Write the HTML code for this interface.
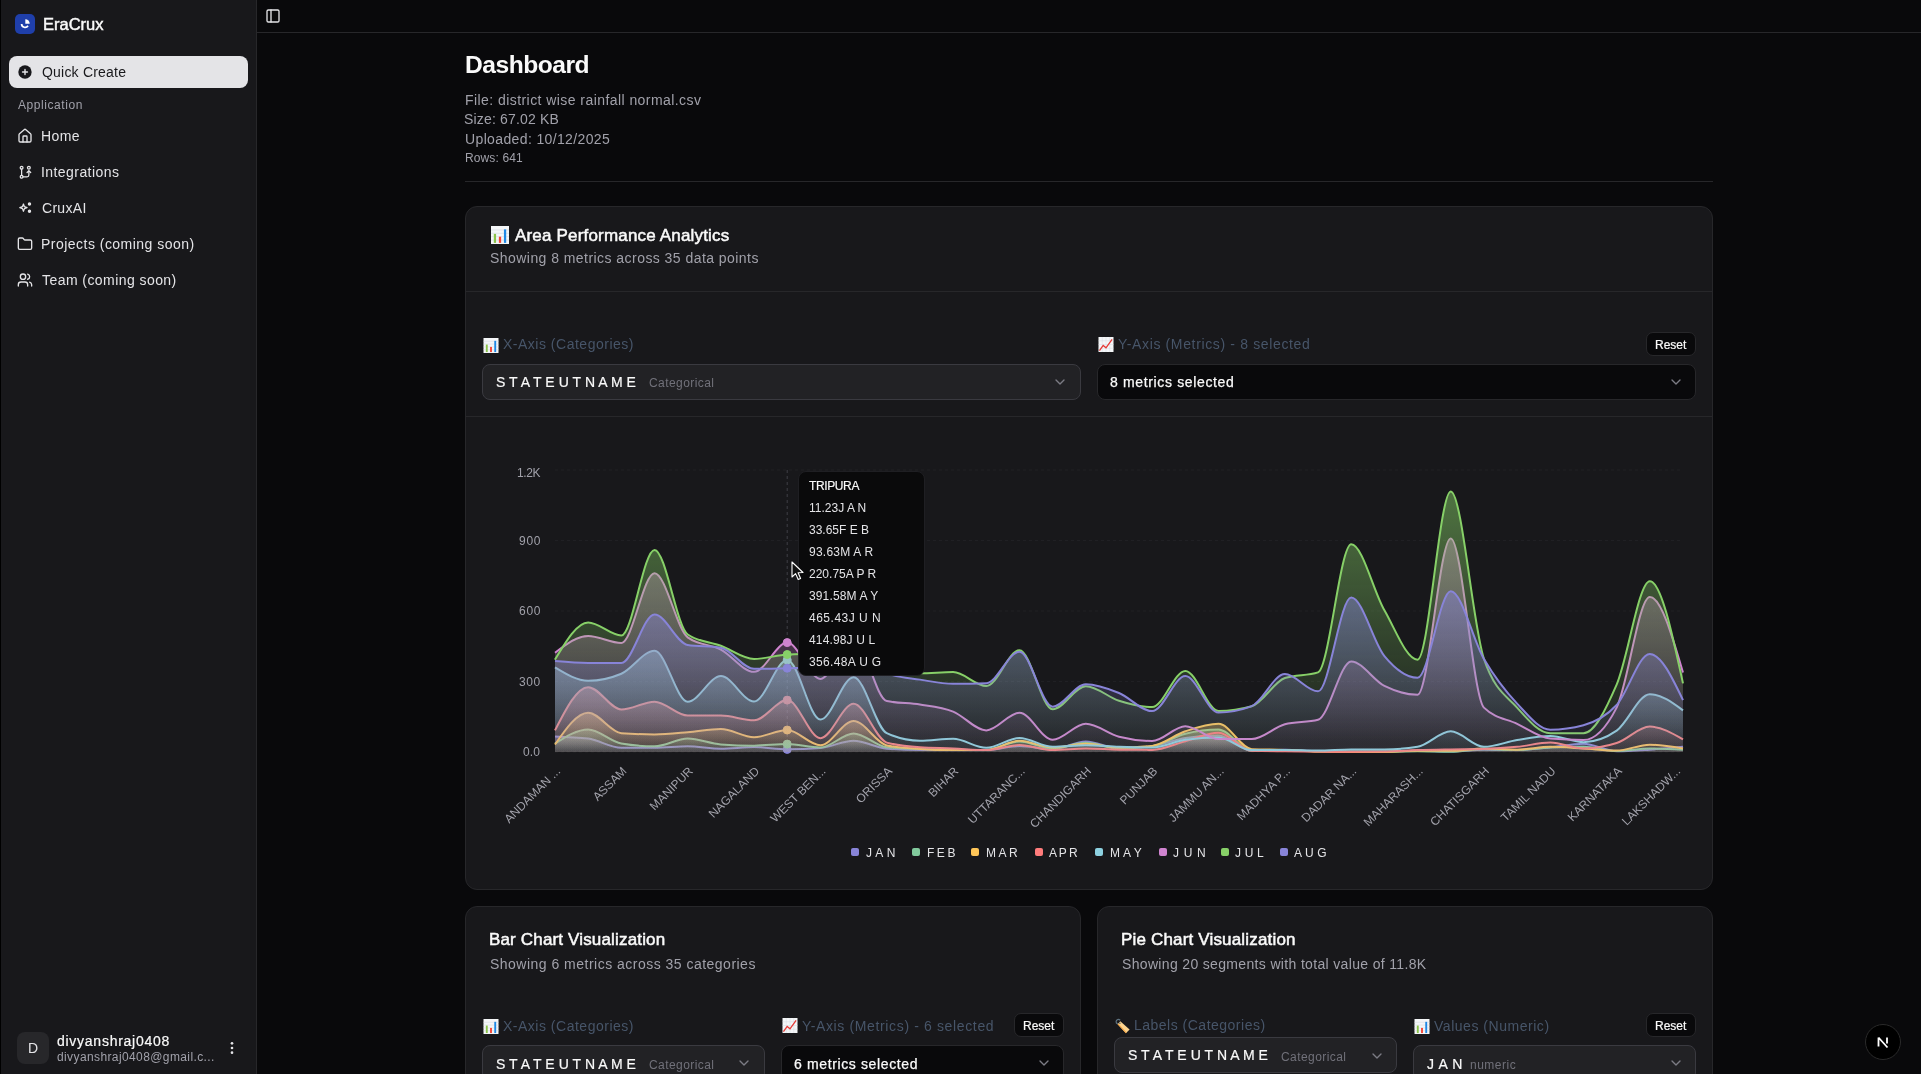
<!DOCTYPE html>
<html><head><meta charset="utf-8">
<style>
*{box-sizing:border-box;margin:0;padding:0}
html,body{width:1921px;height:1074px;overflow:hidden;background:#09090b;font-family:"Liberation Sans",sans-serif;color:#fafafa;position:relative}
.abs{position:absolute}
.t{position:absolute;white-space:nowrap;line-height:1;will-change:transform}
svg{position:absolute;overflow:visible}
.card{position:absolute;background:#18181b;border:1px solid #27272a;border-radius:12px}
.sel{position:absolute;border:1px solid #3a3a40;border-radius:8px;background:#222225}
.sel2{position:absolute;border:1px solid #27272a;border-radius:8px;background:#09090b}
.btn{position:absolute;border:1px solid #27272a;border-radius:7px;background:#09090b}
</style></head><body>
<div class="abs" style="left:0;top:0;width:1px;height:1074px;background:#000"></div>
<div class="abs" style="left:1px;top:0;width:256px;height:1074px;background:#18181b;border-right:1px solid #27272a"></div>
<div class="abs" style="left:257px;top:0;width:1664px;height:33px;border-bottom:1px solid #27272a"></div>
<div class="abs" style="left:15px;top:14px;width:20px;height:20px;border-radius:5px;background:#1f3faa"></div>
<svg style="left:15px;top:14px" width="20" height="20" viewBox="0 0 20 20"><path d="M6.6 10A3.45 3.45 0 0 0 13 11.7" stroke="#fff" stroke-width="1.75" fill="none"/><path d="M10.3 9.7V5.3A4.4 4.4 0 0 1 14.7 9.7Z" fill="#fff"/></svg>
<div class="t" style="left:42.80px;top:16.45px;font-size:16.5px;color:#fafafa;-webkit-text-stroke:0.45px currentColor;letter-spacing:-0.011px;">EraCrux</div>
<div class="abs" style="left:9px;top:56px;width:239px;height:32px;border-radius:8px;background:#e4e4e7"></div>
<svg style="left:17px;top:64px" width="16" height="16" viewBox="0 0 24 24"><circle cx="12" cy="12" r="10" fill="#18181b"/><path d="M12 8.3v7.4M8.3 12h7.4" stroke="#e4e4e7" stroke-width="2.1" stroke-linecap="round"/></svg>
<div class="t" style="left:41.80px;top:65.37px;font-size:14px;color:#18181b;letter-spacing:0.208px;">Quick Create</div>
<div class="t" style="left:17.60px;top:98.73px;font-size:12px;color:#a1a1aa;letter-spacing:0.567px;">Application</div>
<svg style="left:17px;top:128px;color:#e4e4e7" width="16" height="16" viewBox="0 0 24 24" fill="none" stroke="currentColor" stroke-width="2" stroke-linecap="round" stroke-linejoin="round"><path d="M15 21v-8a1 1 0 0 0-1-1h-4a1 1 0 0 0-1 1v8"/><path d="M3 10a2 2 0 0 1 .709-1.528l7-5.999a2 2 0 0 1 2.582 0l7 5.999A2 2 0 0 1 21 10v9a2 2 0 0 1-2 2H5a2 2 0 0 1-2-2z"/></svg>
<div class="t" style="left:40.80px;top:129.17px;font-size:14px;color:#e4e4e7;letter-spacing:0.380px;">Home</div>
<svg style="left:17.8px;top:164.8px;color:#e4e4e7" width="14.5" height="14.5" viewBox="0 0 24 24" fill="none" stroke="currentColor" stroke-width="2.1" stroke-linecap="round" stroke-linejoin="round"><circle cx="6" cy="4.5" r="2.3"/><circle cx="6" cy="19.5" r="2.3"/><circle cx="18" cy="4.5" r="2.3"/><path d="M6 6.8v10.4"/><path d="M8.3 19.5H15a3 3 0 0 0 3-3V10"/><path d="M15 12.5l3-3 3 3"/></svg>
<div class="t" style="left:40.80px;top:165.17px;font-size:14px;color:#e4e4e7;letter-spacing:0.431px;">Integrations</div>
<svg style="left:17.8px;top:200.8px;color:#e4e4e7" width="14.5" height="14.5" viewBox="0 0 24 24" fill="none" stroke="currentColor" stroke-width="2.1" stroke-linecap="round" stroke-linejoin="round"><path d="M9 5l1.6 4.4L15 11l-4.4 1.6L9 17l-1.6-4.4L3 11l4.4-1.6z"/><circle cx="19" cy="5" r="1.8" fill="currentColor"/><circle cx="19" cy="17" r="1.8" fill="currentColor"/></svg>
<div class="t" style="left:41.80px;top:201.17px;font-size:14px;color:#e4e4e7;letter-spacing:0.301px;">CruxAI</div>
<svg style="left:17px;top:236px;color:#e4e4e7" width="16" height="16" viewBox="0 0 24 24" fill="none" stroke="currentColor" stroke-width="2" stroke-linecap="round" stroke-linejoin="round"><path d="M20 20a2 2 0 0 0 2-2V8a2 2 0 0 0-2-2h-7.9a2 2 0 0 1-1.69-.9L9.6 3.9A2 2 0 0 0 7.93 3H4a2 2 0 0 0-2 2v13a2 2 0 0 0 2 2Z"/></svg>
<div class="t" style="left:40.80px;top:237.17px;font-size:14px;color:#e4e4e7;letter-spacing:0.476px;">Projects (coming soon)</div>
<svg style="left:17px;top:272px;color:#e4e4e7" width="16" height="16" viewBox="0 0 24 24" fill="none" stroke="currentColor" stroke-width="2" stroke-linecap="round" stroke-linejoin="round"><path d="M16 21v-2a4 4 0 0 0-4-4H6a4 4 0 0 0-4 4v2"/><circle cx="9" cy="7" r="4"/><path d="M22 21v-2a4 4 0 0 0-3-3.87"/><path d="M16 3.13a4 4 0 0 1 0 7.75"/></svg>
<div class="t" style="left:41.80px;top:273.17px;font-size:14px;color:#e4e4e7;letter-spacing:0.437px;">Team (coming soon)</div>
<div class="abs" style="left:17px;top:1032px;width:32px;height:32px;border-radius:8px;background:#27272a"></div>
<div class="t" style="left:28.00px;top:1041.47px;font-size:14px;color:#e4e4e7;letter-spacing:0.000px;">D</div>
<div class="t" style="left:57.30px;top:1034.17px;font-size:14px;color:#fafafa;-webkit-text-stroke:0.2px currentColor;letter-spacing:0.738px;">divyanshraj0408</div>
<div class="t" style="left:57.30px;top:1050.93px;font-size:12px;color:#a1a1aa;letter-spacing:0.390px;">divyanshraj0408@gmail.c...</div>
<svg style="left:224px;top:1040px" width="16" height="16" viewBox="0 0 24 24" fill="#e4e4e7"><circle cx="12" cy="5" r="2"/><circle cx="12" cy="12" r="2"/><circle cx="12" cy="19" r="2"/></svg>
<svg style="left:265px;top:8px;color:#e4e4e7" width="16" height="16" viewBox="0 0 24 24" fill="none" stroke="currentColor" stroke-width="2" stroke-linecap="round" stroke-linejoin="round"><rect width="18" height="18" x="3" y="3" rx="2"/><path d="M9 3v18"/></svg>
<div class="t" style="left:464.90px;top:53.19px;font-size:24.6px;color:#fafafa;font-weight:bold;letter-spacing:-0.479px;">Dashboard</div>
<div class="t" style="left:464.50px;top:93.17px;font-size:14px;color:#a1a1aa;letter-spacing:0.437px;">File: district wise rainfall normal.csv</div>
<div class="t" style="left:464.40px;top:112.47px;font-size:14px;color:#a1a1aa;letter-spacing:0.179px;">Size: 67.02 KB</div>
<div class="t" style="left:464.50px;top:132.17px;font-size:14px;color:#a1a1aa;letter-spacing:0.368px;">Uploaded: 10/12/2025</div>
<div class="t" style="left:464.60px;top:151.83px;font-size:12px;color:#a1a1aa;letter-spacing:0.122px;">Rows: 641</div>
<div class="abs" style="left:465px;top:181px;width:1248px;height:1px;background:#27272a"></div>
<div class="card" style="left:465px;top:206px;width:1248px;height:684px"></div>
<svg style="left:491px;top:226px" width="18" height="18" viewBox="0 0 16 16"><rect x="0" y="0" width="16" height="16" fill="#f4f6f8"/><path d="M0 3.5h16M0 6.5h16M0 9.5h16M0 12.5h16" stroke="#d5dbe3" stroke-width="0.6"/><rect x="2.5" y="7" width="2" height="8" fill="#8bc34a"/><rect x="7" y="9.5" width="2" height="5.5" fill="#f44336"/><rect x="11.5" y="3" width="2" height="12" fill="#1e88e5"/></svg>
<div class="t" style="left:514.60px;top:226.58px;font-size:17px;color:#fafafa;-webkit-text-stroke:0.5px currentColor;letter-spacing:0.180px;">Area Performance Analytics</div>
<div class="t" style="left:489.80px;top:250.67px;font-size:14px;color:#a1a1aa;letter-spacing:0.449px;">Showing 8 metrics across 35 data points</div>
<div class="abs" style="left:466px;top:291px;width:1246px;height:1px;background:#27272a"></div>
<svg style="left:483px;top:338px" width="16" height="15" viewBox="0 0 16 16"><rect x="0" y="0" width="16" height="16" fill="#f4f6f8"/><path d="M0 3.5h16M0 6.5h16M0 9.5h16M0 12.5h16" stroke="#d5dbe3" stroke-width="0.6"/><rect x="2.5" y="7" width="2" height="8" fill="#8bc34a"/><rect x="7" y="9.5" width="2" height="5.5" fill="#f44336"/><rect x="11.5" y="3" width="2" height="12" fill="#1e88e5"/></svg>
<div class="t" style="left:503.20px;top:337.37px;font-size:14px;color:#475569;letter-spacing:0.505px;">X-Axis (Categories)</div>
<div class="sel" style="left:482px;top:364px;width:599px;height:36px"></div>
<div class="t" style="left:495.70px;top:375.27px;font-size:14px;color:#fafafa;-webkit-text-stroke:0.2px currentColor;letter-spacing:0.071px;">S T A T E U T N A M E</div>
<div class="t" style="left:648.70px;top:377.43px;font-size:12px;color:#71717a;letter-spacing:0.427px;">Categorical</div>
<svg style="left:1052px;top:374px;color:#7c7c85" width="16" height="16" viewBox="0 0 24 24" fill="none" stroke="currentColor" stroke-width="2" stroke-linecap="round" stroke-linejoin="round"><path d="m6 9 6 6 6-6"/></svg>
<svg style="left:1098px;top:337px" width="16" height="15" viewBox="0 0 16 16"><rect x="0" y="0" width="16" height="16" fill="#f4f6f8"/><path d="M0 4h16M0 8h16M0 12h16M4 0v16M8 0v16M12 0v16" stroke="#d5dbe3" stroke-width="0.5"/><path d="M1 14.5L5 9l3 2.5L14.5 2.5" stroke="#e53935" stroke-width="1.4" fill="none"/></svg>
<div class="t" style="left:1118.00px;top:337.37px;font-size:14px;color:#475569;letter-spacing:0.644px;">Y-Axis (Metrics) - 8 selected</div>
<div class="btn" style="left:1646px;top:332px;width:50px;height:24px"></div>
<div class="t" style="left:1655.00px;top:338.63px;font-size:12px;color:#fafafa;-webkit-text-stroke:0.2px currentColor;letter-spacing:-0.003px;">Reset</div>
<div class="sel2" style="left:1097px;top:364px;width:599px;height:36px"></div>
<div class="t" style="left:1110.30px;top:375.27px;font-size:14px;color:#fafafa;-webkit-text-stroke:0.25px currentColor;letter-spacing:0.645px;">8 metrics selected</div>
<svg style="left:1668px;top:374px;color:#7c7c85" width="16" height="16" viewBox="0 0 24 24" fill="none" stroke="currentColor" stroke-width="2" stroke-linecap="round" stroke-linejoin="round"><path d="m6 9 6 6 6-6"/></svg>
<div class="abs" style="left:466px;top:416px;width:1246px;height:1px;background:#27272a"></div>
<svg style="left:0;top:0;will-change:transform" width="1921" height="1074" viewBox="0 0 1921 1074">
<defs>
<linearGradient id="g0" x1="0" y1="0" x2="0" y2="1"><stop offset="5%" stop-color="#8884d8" stop-opacity="0.8"/><stop offset="95%" stop-color="#8884d8" stop-opacity="0.1"/></linearGradient>
<linearGradient id="g1" x1="0" y1="0" x2="0" y2="1"><stop offset="5%" stop-color="#82ca9d" stop-opacity="0.8"/><stop offset="95%" stop-color="#82ca9d" stop-opacity="0.1"/></linearGradient>
<linearGradient id="g2" x1="0" y1="0" x2="0" y2="1"><stop offset="5%" stop-color="#ffc658" stop-opacity="0.8"/><stop offset="95%" stop-color="#ffc658" stop-opacity="0.1"/></linearGradient>
<linearGradient id="g3" x1="0" y1="0" x2="0" y2="1"><stop offset="5%" stop-color="#ff7c7c" stop-opacity="0.8"/><stop offset="95%" stop-color="#ff7c7c" stop-opacity="0.1"/></linearGradient>
<linearGradient id="g4" x1="0" y1="0" x2="0" y2="1"><stop offset="5%" stop-color="#8dd1e1" stop-opacity="0.8"/><stop offset="95%" stop-color="#8dd1e1" stop-opacity="0.1"/></linearGradient>
<linearGradient id="g5" x1="0" y1="0" x2="0" y2="1"><stop offset="5%" stop-color="#d084d0" stop-opacity="0.8"/><stop offset="95%" stop-color="#d084d0" stop-opacity="0.1"/></linearGradient>
<linearGradient id="g6" x1="0" y1="0" x2="0" y2="1"><stop offset="5%" stop-color="#87d068" stop-opacity="0.8"/><stop offset="95%" stop-color="#87d068" stop-opacity="0.1"/></linearGradient>
<linearGradient id="g7" x1="0" y1="0" x2="0" y2="1"><stop offset="5%" stop-color="#8884d8" stop-opacity="0.8"/><stop offset="95%" stop-color="#8884d8" stop-opacity="0.1"/></linearGradient>
</defs>
<line x1="555.0" y1="752.0" x2="1683.0" y2="752.0" stroke="#202024" stroke-dasharray="3 3" stroke-width="1"/>
<line x1="555.0" y1="681.5" x2="1683.0" y2="681.5" stroke="#202024" stroke-dasharray="3 3" stroke-width="1"/>
<line x1="555.0" y1="611.0" x2="1683.0" y2="611.0" stroke="#202024" stroke-dasharray="3 3" stroke-width="1"/>
<line x1="555.0" y1="540.5" x2="1683.0" y2="540.5" stroke="#202024" stroke-dasharray="3 3" stroke-width="1"/>
<line x1="555.0" y1="470.0" x2="1683.0" y2="470.0" stroke="#202024" stroke-dasharray="3 3" stroke-width="1"/>
<line x1="787.2" y1="470" x2="787.2" y2="752" stroke="#3f3f46" stroke-dasharray="3 3" stroke-width="1"/>
<path d="M555.00,736.49C566.06,736.84,577.12,737.20,588.18,738.61C599.24,740.01,610.29,747.77,621.35,747.77C632.41,747.77,643.47,747.77,654.53,747.77C665.59,747.77,676.65,746.36,687.71,746.36C698.76,746.36,709.82,748.71,720.88,748.71C731.94,748.71,743.00,747.07,754.06,747.07C765.12,747.07,776.18,749.36,787.24,749.36C798.29,749.36,809.35,748.91,820.41,748.00C831.47,747.10,842.53,740.72,853.59,740.72C864.65,740.72,875.71,747.77,886.76,748.71C897.82,749.65,908.88,750.12,919.94,750.12C931.00,750.12,942.06,750.12,953.12,750.12C964.18,750.12,975.24,750.12,986.29,750.12C997.35,750.12,1008.41,746.12,1019.47,746.12C1030.53,746.12,1041.59,749.18,1052.65,749.18C1063.71,749.18,1074.76,741.42,1085.82,741.42C1096.88,741.42,1107.94,748.48,1119.00,748.48C1130.06,748.48,1141.12,747.69,1152.18,746.12C1163.24,744.56,1174.29,739.47,1185.35,737.90C1196.41,736.33,1207.47,735.55,1218.53,735.55C1229.59,735.55,1240.65,750.83,1251.71,750.83C1262.76,750.83,1273.82,749.65,1284.88,749.65C1295.94,749.65,1307.00,751.14,1318.06,751.29C1329.12,751.45,1340.18,751.45,1351.24,751.53C1362.29,751.61,1373.35,751.76,1384.41,751.76C1395.47,751.76,1406.53,750.83,1417.59,750.83C1428.65,750.83,1439.71,751.53,1450.76,751.53C1461.82,751.53,1472.88,749.65,1483.94,749.65C1495.00,749.65,1506.06,750.12,1517.12,750.12C1528.18,750.12,1539.24,748.36,1550.29,747.30C1561.35,746.24,1572.41,743.77,1583.47,743.77C1594.53,743.77,1605.59,751.29,1616.65,751.29C1627.71,751.29,1638.76,750.39,1649.82,749.65C1660.88,748.91,1671.94,747.87,1683.00,746.83L1683.0,752.0L555.0,752.0Z" fill="url(#g0)" fill-opacity="0.6" stroke="none"/>
<path d="M555.00,736.49C566.06,736.84,577.12,737.20,588.18,738.61C599.24,740.01,610.29,747.77,621.35,747.77C632.41,747.77,643.47,747.77,654.53,747.77C665.59,747.77,676.65,746.36,687.71,746.36C698.76,746.36,709.82,748.71,720.88,748.71C731.94,748.71,743.00,747.07,754.06,747.07C765.12,747.07,776.18,749.36,787.24,749.36C798.29,749.36,809.35,748.91,820.41,748.00C831.47,747.10,842.53,740.72,853.59,740.72C864.65,740.72,875.71,747.77,886.76,748.71C897.82,749.65,908.88,750.12,919.94,750.12C931.00,750.12,942.06,750.12,953.12,750.12C964.18,750.12,975.24,750.12,986.29,750.12C997.35,750.12,1008.41,746.12,1019.47,746.12C1030.53,746.12,1041.59,749.18,1052.65,749.18C1063.71,749.18,1074.76,741.42,1085.82,741.42C1096.88,741.42,1107.94,748.48,1119.00,748.48C1130.06,748.48,1141.12,747.69,1152.18,746.12C1163.24,744.56,1174.29,739.47,1185.35,737.90C1196.41,736.33,1207.47,735.55,1218.53,735.55C1229.59,735.55,1240.65,750.83,1251.71,750.83C1262.76,750.83,1273.82,749.65,1284.88,749.65C1295.94,749.65,1307.00,751.14,1318.06,751.29C1329.12,751.45,1340.18,751.45,1351.24,751.53C1362.29,751.61,1373.35,751.76,1384.41,751.76C1395.47,751.76,1406.53,750.83,1417.59,750.83C1428.65,750.83,1439.71,751.53,1450.76,751.53C1461.82,751.53,1472.88,749.65,1483.94,749.65C1495.00,749.65,1506.06,750.12,1517.12,750.12C1528.18,750.12,1539.24,748.36,1550.29,747.30C1561.35,746.24,1572.41,743.77,1583.47,743.77C1594.53,743.77,1605.59,751.29,1616.65,751.29C1627.71,751.29,1638.76,750.39,1649.82,749.65C1660.88,748.91,1671.94,747.87,1683.00,746.83" fill="none" stroke="#8884d8" stroke-width="2"/>
<circle cx="787.2" cy="749.4" r="4" fill="#8884d8" stroke="#8884d8" stroke-width="1"/>
<path d="M555.00,743.54C566.06,736.49,577.12,729.44,588.18,729.44C599.24,729.44,610.29,741.66,621.35,743.54C632.41,745.42,643.47,746.36,654.53,746.36C665.59,746.36,676.65,738.61,687.71,738.61C698.76,738.61,709.82,743.70,720.88,744.48C731.94,745.26,743.00,745.65,754.06,745.65C765.12,745.65,776.18,744.09,787.24,744.09C798.29,744.09,809.35,747.53,820.41,747.53C831.47,747.53,842.53,733.43,853.59,733.43C864.65,733.43,875.71,746.20,886.76,747.30C897.82,748.40,908.88,748.51,919.94,748.95C931.00,749.38,942.06,749.88,953.12,749.88C964.18,749.88,975.24,749.88,986.29,749.88C997.35,749.88,1008.41,741.42,1019.47,741.42C1030.53,741.42,1041.59,748.48,1052.65,748.48C1063.71,748.48,1074.76,742.84,1085.82,742.84C1096.88,742.84,1107.94,748.48,1119.00,748.48C1130.06,748.48,1141.12,747.69,1152.18,746.12C1163.24,744.56,1174.29,736.45,1185.35,733.67C1196.41,730.89,1207.47,729.44,1218.53,729.44C1229.59,729.44,1240.65,750.83,1251.71,750.83C1262.76,750.83,1273.82,750.12,1284.88,750.12C1295.94,750.12,1307.00,751.37,1318.06,751.53C1329.12,751.69,1340.18,751.76,1351.24,751.76C1362.29,751.76,1373.35,751.76,1384.41,751.76C1395.47,751.76,1406.53,751.29,1417.59,751.29C1428.65,751.29,1439.71,751.76,1450.76,751.76C1461.82,751.76,1472.88,749.18,1483.94,749.18C1495.00,749.18,1506.06,750.12,1517.12,750.12C1528.18,750.12,1539.24,748.00,1550.29,747.53C1561.35,747.07,1572.41,746.83,1583.47,746.83C1594.53,746.83,1605.59,751.06,1616.65,751.06C1627.71,751.06,1638.76,748.48,1649.82,748.48C1660.88,748.48,1671.94,749.06,1683.00,749.65L1683.0,752.0L555.0,752.0Z" fill="url(#g1)" fill-opacity="0.6" stroke="none"/>
<path d="M555.00,743.54C566.06,736.49,577.12,729.44,588.18,729.44C599.24,729.44,610.29,741.66,621.35,743.54C632.41,745.42,643.47,746.36,654.53,746.36C665.59,746.36,676.65,738.61,687.71,738.61C698.76,738.61,709.82,743.70,720.88,744.48C731.94,745.26,743.00,745.65,754.06,745.65C765.12,745.65,776.18,744.09,787.24,744.09C798.29,744.09,809.35,747.53,820.41,747.53C831.47,747.53,842.53,733.43,853.59,733.43C864.65,733.43,875.71,746.20,886.76,747.30C897.82,748.40,908.88,748.51,919.94,748.95C931.00,749.38,942.06,749.88,953.12,749.88C964.18,749.88,975.24,749.88,986.29,749.88C997.35,749.88,1008.41,741.42,1019.47,741.42C1030.53,741.42,1041.59,748.48,1052.65,748.48C1063.71,748.48,1074.76,742.84,1085.82,742.84C1096.88,742.84,1107.94,748.48,1119.00,748.48C1130.06,748.48,1141.12,747.69,1152.18,746.12C1163.24,744.56,1174.29,736.45,1185.35,733.67C1196.41,730.89,1207.47,729.44,1218.53,729.44C1229.59,729.44,1240.65,750.83,1251.71,750.83C1262.76,750.83,1273.82,750.12,1284.88,750.12C1295.94,750.12,1307.00,751.37,1318.06,751.53C1329.12,751.69,1340.18,751.76,1351.24,751.76C1362.29,751.76,1373.35,751.76,1384.41,751.76C1395.47,751.76,1406.53,751.29,1417.59,751.29C1428.65,751.29,1439.71,751.76,1450.76,751.76C1461.82,751.76,1472.88,749.18,1483.94,749.18C1495.00,749.18,1506.06,750.12,1517.12,750.12C1528.18,750.12,1539.24,748.00,1550.29,747.53C1561.35,747.07,1572.41,746.83,1583.47,746.83C1594.53,746.83,1605.59,751.06,1616.65,751.06C1627.71,751.06,1638.76,748.48,1649.82,748.48C1660.88,748.48,1671.94,749.06,1683.00,749.65" fill="none" stroke="#82ca9d" stroke-width="2"/>
<circle cx="787.2" cy="744.1" r="4" fill="#82ca9d" stroke="#82ca9d" stroke-width="1"/>
<path d="M555.00,744.48C566.06,728.62,577.12,712.75,588.18,712.75C599.24,712.75,610.29,732.42,621.35,733.20C632.41,733.98,643.47,734.38,654.53,734.38C665.59,734.38,676.65,733.16,687.71,732.26C698.76,731.36,709.82,728.97,720.88,728.97C731.94,728.97,743.00,737.20,754.06,737.20C765.12,737.20,776.18,730.00,787.24,730.00C798.29,730.00,809.35,745.18,820.41,745.18C831.47,745.18,842.53,720.98,853.59,720.98C864.65,720.98,875.71,743.07,886.76,745.42C897.82,747.77,908.88,748.16,919.94,748.95C931.00,749.73,942.06,750.12,953.12,750.12C964.18,750.12,975.24,750.04,986.29,749.88C997.35,749.73,1008.41,740.72,1019.47,740.72C1030.53,740.72,1041.59,747.53,1052.65,747.53C1063.71,747.53,1074.76,743.77,1085.82,743.77C1096.88,743.77,1107.94,747.53,1119.00,747.53C1130.06,747.53,1141.12,746.99,1152.18,745.89C1163.24,744.79,1174.29,735.00,1185.35,731.32C1196.41,727.64,1207.47,723.80,1218.53,723.80C1229.59,723.80,1240.65,748.71,1251.71,749.18C1262.76,749.65,1273.82,749.49,1284.88,749.88C1295.94,750.28,1307.00,751.37,1318.06,751.53C1329.12,751.69,1340.18,751.76,1351.24,751.76C1362.29,751.76,1373.35,751.76,1384.41,751.76C1395.47,751.76,1406.53,750.83,1417.59,750.83C1428.65,750.83,1439.71,750.83,1450.76,750.83C1461.82,750.83,1472.88,748.48,1483.94,748.48C1495.00,748.48,1506.06,749.65,1517.12,749.65C1528.18,749.65,1539.24,746.83,1550.29,746.83C1561.35,746.83,1572.41,747.85,1583.47,748.48C1594.53,749.10,1605.59,750.59,1616.65,750.59C1627.71,750.59,1638.76,744.72,1649.82,744.72C1660.88,744.72,1671.94,746.60,1683.00,748.48L1683.0,752.0L555.0,752.0Z" fill="url(#g2)" fill-opacity="0.6" stroke="none"/>
<path d="M555.00,744.48C566.06,728.62,577.12,712.75,588.18,712.75C599.24,712.75,610.29,732.42,621.35,733.20C632.41,733.98,643.47,734.38,654.53,734.38C665.59,734.38,676.65,733.16,687.71,732.26C698.76,731.36,709.82,728.97,720.88,728.97C731.94,728.97,743.00,737.20,754.06,737.20C765.12,737.20,776.18,730.00,787.24,730.00C798.29,730.00,809.35,745.18,820.41,745.18C831.47,745.18,842.53,720.98,853.59,720.98C864.65,720.98,875.71,743.07,886.76,745.42C897.82,747.77,908.88,748.16,919.94,748.95C931.00,749.73,942.06,750.12,953.12,750.12C964.18,750.12,975.24,750.04,986.29,749.88C997.35,749.73,1008.41,740.72,1019.47,740.72C1030.53,740.72,1041.59,747.53,1052.65,747.53C1063.71,747.53,1074.76,743.77,1085.82,743.77C1096.88,743.77,1107.94,747.53,1119.00,747.53C1130.06,747.53,1141.12,746.99,1152.18,745.89C1163.24,744.79,1174.29,735.00,1185.35,731.32C1196.41,727.64,1207.47,723.80,1218.53,723.80C1229.59,723.80,1240.65,748.71,1251.71,749.18C1262.76,749.65,1273.82,749.49,1284.88,749.88C1295.94,750.28,1307.00,751.37,1318.06,751.53C1329.12,751.69,1340.18,751.76,1351.24,751.76C1362.29,751.76,1373.35,751.76,1384.41,751.76C1395.47,751.76,1406.53,750.83,1417.59,750.83C1428.65,750.83,1439.71,750.83,1450.76,750.83C1461.82,750.83,1472.88,748.48,1483.94,748.48C1495.00,748.48,1506.06,749.65,1517.12,749.65C1528.18,749.65,1539.24,746.83,1550.29,746.83C1561.35,746.83,1572.41,747.85,1583.47,748.48C1594.53,749.10,1605.59,750.59,1616.65,750.59C1627.71,750.59,1638.76,744.72,1649.82,744.72C1660.88,744.72,1671.94,746.60,1683.00,748.48" fill="none" stroke="#ffc658" stroke-width="2"/>
<circle cx="787.2" cy="730.0" r="4" fill="#ffc658" stroke="#ffc658" stroke-width="1"/>
<path d="M555.00,730.38C566.06,708.76,577.12,687.14,588.18,687.14C599.24,687.14,610.29,709.47,621.35,709.47C632.41,709.47,643.47,701.71,654.53,701.71C665.59,701.71,676.65,715.58,687.71,715.58C698.76,715.58,709.82,715.58,720.88,715.58C731.94,715.58,743.00,720.27,754.06,720.27C765.12,720.27,776.18,700.12,787.24,700.12C798.29,700.12,809.35,738.13,820.41,738.13C831.47,738.13,842.53,703.83,853.59,703.83C864.65,703.83,875.71,739.47,886.76,742.60C897.82,745.73,908.88,746.52,919.94,747.30C931.00,748.08,942.06,748.00,953.12,748.48C964.18,748.95,975.24,750.12,986.29,750.12C997.35,750.12,1008.41,744.95,1019.47,744.95C1030.53,744.95,1041.59,750.12,1052.65,750.12C1063.71,750.12,1074.76,748.48,1085.82,748.48C1096.88,748.48,1107.94,749.49,1119.00,749.65C1130.06,749.81,1141.12,749.88,1152.18,749.88C1163.24,749.88,1174.29,744.05,1185.35,741.19C1196.41,738.33,1207.47,732.73,1218.53,732.73C1229.59,732.73,1240.65,750.51,1251.71,750.83C1262.76,751.14,1273.82,751.18,1284.88,751.29C1295.94,751.41,1307.00,751.45,1318.06,751.53C1329.12,751.61,1340.18,751.76,1351.24,751.76C1362.29,751.76,1373.35,751.69,1384.41,751.53C1395.47,751.37,1406.53,750.47,1417.59,750.12C1428.65,749.77,1439.71,749.61,1450.76,749.41C1461.82,749.22,1472.88,749.26,1483.94,748.95C1495.00,748.63,1506.06,747.89,1517.12,746.83C1528.18,745.77,1539.24,742.60,1550.29,742.60C1561.35,742.60,1572.41,748.48,1583.47,748.48C1594.53,748.48,1605.59,746.67,1616.65,743.07C1627.71,739.47,1638.76,726.62,1649.82,726.62C1660.88,726.62,1671.94,732.96,1683.00,739.31L1683.0,752.0L555.0,752.0Z" fill="url(#g3)" fill-opacity="0.6" stroke="none"/>
<path d="M555.00,730.38C566.06,708.76,577.12,687.14,588.18,687.14C599.24,687.14,610.29,709.47,621.35,709.47C632.41,709.47,643.47,701.71,654.53,701.71C665.59,701.71,676.65,715.58,687.71,715.58C698.76,715.58,709.82,715.58,720.88,715.58C731.94,715.58,743.00,720.27,754.06,720.27C765.12,720.27,776.18,700.12,787.24,700.12C798.29,700.12,809.35,738.13,820.41,738.13C831.47,738.13,842.53,703.83,853.59,703.83C864.65,703.83,875.71,739.47,886.76,742.60C897.82,745.73,908.88,746.52,919.94,747.30C931.00,748.08,942.06,748.00,953.12,748.48C964.18,748.95,975.24,750.12,986.29,750.12C997.35,750.12,1008.41,744.95,1019.47,744.95C1030.53,744.95,1041.59,750.12,1052.65,750.12C1063.71,750.12,1074.76,748.48,1085.82,748.48C1096.88,748.48,1107.94,749.49,1119.00,749.65C1130.06,749.81,1141.12,749.88,1152.18,749.88C1163.24,749.88,1174.29,744.05,1185.35,741.19C1196.41,738.33,1207.47,732.73,1218.53,732.73C1229.59,732.73,1240.65,750.51,1251.71,750.83C1262.76,751.14,1273.82,751.18,1284.88,751.29C1295.94,751.41,1307.00,751.45,1318.06,751.53C1329.12,751.61,1340.18,751.76,1351.24,751.76C1362.29,751.76,1373.35,751.69,1384.41,751.53C1395.47,751.37,1406.53,750.47,1417.59,750.12C1428.65,749.77,1439.71,749.61,1450.76,749.41C1461.82,749.22,1472.88,749.26,1483.94,748.95C1495.00,748.63,1506.06,747.89,1517.12,746.83C1528.18,745.77,1539.24,742.60,1550.29,742.60C1561.35,742.60,1572.41,748.48,1583.47,748.48C1594.53,748.48,1605.59,746.67,1616.65,743.07C1627.71,739.47,1638.76,726.62,1649.82,726.62C1660.88,726.62,1671.94,732.96,1683.00,739.31" fill="none" stroke="#ff7c7c" stroke-width="2"/>
<circle cx="787.2" cy="700.1" r="4" fill="#ff7c7c" stroke="#ff7c7c" stroke-width="1"/>
<path d="M555.00,667.40C566.06,674.10,577.12,680.79,588.18,680.79C599.24,680.79,610.29,678.44,621.35,673.75C632.41,669.05,643.47,650.72,654.53,650.72C665.59,650.72,676.65,701.71,687.71,701.71C698.76,701.71,709.82,676.10,720.88,676.10C731.94,676.10,743.00,701.48,754.06,701.48C765.12,701.48,776.18,659.98,787.24,659.98C798.29,659.98,809.35,719.57,820.41,719.57C831.47,719.57,842.53,677.27,853.59,677.27C864.65,677.27,875.71,728.19,886.76,733.20C897.82,738.21,908.88,740.72,919.94,740.72C931.00,740.72,942.06,738.84,953.12,738.84C964.18,738.84,975.24,747.77,986.29,747.77C997.35,747.77,1008.41,737.90,1019.47,737.90C1030.53,737.90,1041.59,746.83,1052.65,746.83C1063.71,746.83,1074.76,745.18,1085.82,745.18C1096.88,745.18,1107.94,746.44,1119.00,746.83C1130.06,747.22,1141.12,747.53,1152.18,747.53C1163.24,747.53,1174.29,741.35,1185.35,739.78C1196.41,738.21,1207.47,737.43,1218.53,737.43C1229.59,737.43,1240.65,750.12,1251.71,750.12C1262.76,750.12,1273.82,749.88,1284.88,749.88C1295.94,749.88,1307.00,750.59,1318.06,750.59C1329.12,750.59,1340.18,749.41,1351.24,749.41C1362.29,749.41,1373.35,749.41,1384.41,749.41C1395.47,749.41,1406.53,748.55,1417.59,746.83C1428.65,745.11,1439.71,731.32,1450.76,731.32C1461.82,731.32,1472.88,746.83,1483.94,746.83C1495.00,746.83,1506.06,741.82,1517.12,740.01C1528.18,738.21,1539.24,736.02,1550.29,736.02C1561.35,736.02,1572.41,742.13,1583.47,742.13C1594.53,742.13,1605.59,738.29,1616.65,730.62C1627.71,722.94,1638.76,694.19,1649.82,694.19C1660.88,694.19,1671.94,702.30,1683.00,710.40L1683.0,752.0L555.0,752.0Z" fill="url(#g4)" fill-opacity="0.6" stroke="none"/>
<path d="M555.00,667.40C566.06,674.10,577.12,680.79,588.18,680.79C599.24,680.79,610.29,678.44,621.35,673.75C632.41,669.05,643.47,650.72,654.53,650.72C665.59,650.72,676.65,701.71,687.71,701.71C698.76,701.71,709.82,676.10,720.88,676.10C731.94,676.10,743.00,701.48,754.06,701.48C765.12,701.48,776.18,659.98,787.24,659.98C798.29,659.98,809.35,719.57,820.41,719.57C831.47,719.57,842.53,677.27,853.59,677.27C864.65,677.27,875.71,728.19,886.76,733.20C897.82,738.21,908.88,740.72,919.94,740.72C931.00,740.72,942.06,738.84,953.12,738.84C964.18,738.84,975.24,747.77,986.29,747.77C997.35,747.77,1008.41,737.90,1019.47,737.90C1030.53,737.90,1041.59,746.83,1052.65,746.83C1063.71,746.83,1074.76,745.18,1085.82,745.18C1096.88,745.18,1107.94,746.44,1119.00,746.83C1130.06,747.22,1141.12,747.53,1152.18,747.53C1163.24,747.53,1174.29,741.35,1185.35,739.78C1196.41,738.21,1207.47,737.43,1218.53,737.43C1229.59,737.43,1240.65,750.12,1251.71,750.12C1262.76,750.12,1273.82,749.88,1284.88,749.88C1295.94,749.88,1307.00,750.59,1318.06,750.59C1329.12,750.59,1340.18,749.41,1351.24,749.41C1362.29,749.41,1373.35,749.41,1384.41,749.41C1395.47,749.41,1406.53,748.55,1417.59,746.83C1428.65,745.11,1439.71,731.32,1450.76,731.32C1461.82,731.32,1472.88,746.83,1483.94,746.83C1495.00,746.83,1506.06,741.82,1517.12,740.01C1528.18,738.21,1539.24,736.02,1550.29,736.02C1561.35,736.02,1572.41,742.13,1583.47,742.13C1594.53,742.13,1605.59,738.29,1616.65,730.62C1627.71,722.94,1638.76,694.19,1649.82,694.19C1660.88,694.19,1671.94,702.30,1683.00,710.40" fill="none" stroke="#8dd1e1" stroke-width="2"/>
<circle cx="787.2" cy="660.0" r="4" fill="#8dd1e1" stroke="#8dd1e1" stroke-width="1"/>
<path d="M555.00,652.83C566.06,644.37,577.12,635.91,588.18,635.91C599.24,635.91,610.29,642.96,621.35,642.96C632.41,642.96,643.47,573.16,654.53,573.16C665.59,573.16,676.65,629.17,687.71,637.32C698.76,645.47,709.82,643.78,720.88,649.54C731.94,655.30,743.00,671.87,754.06,671.87C765.12,671.87,776.18,642.62,787.24,642.62C798.29,642.62,809.35,678.91,820.41,678.91C831.47,678.91,842.53,639.20,853.59,639.20C864.65,639.20,875.71,698.65,886.76,701.00C897.82,703.36,908.88,702.77,919.94,704.53C931.00,706.29,942.06,707.27,953.12,711.58C964.18,715.89,975.24,730.38,986.29,730.38C997.35,730.38,1008.41,712.75,1019.47,712.75C1030.53,712.75,1041.59,739.78,1052.65,739.78C1063.71,739.78,1074.76,723.80,1085.82,723.80C1096.88,723.80,1107.94,733.90,1119.00,736.73C1130.06,739.55,1141.12,740.96,1152.18,740.96C1163.24,740.96,1174.29,726.15,1185.35,726.15C1196.41,726.15,1207.47,739.08,1218.53,739.08C1229.59,739.08,1240.65,739.08,1251.71,739.08C1262.76,739.08,1273.82,727.25,1284.88,724.27C1295.94,721.29,1307.00,722.78,1318.06,719.80C1329.12,716.83,1340.18,661.52,1351.24,661.52C1362.29,661.52,1373.35,680.44,1384.41,685.97C1395.47,691.49,1406.53,694.66,1417.59,694.66C1428.65,694.66,1439.71,538.38,1450.76,538.38C1461.82,538.38,1472.88,696.77,1483.94,707.59C1495.00,718.39,1506.06,718.63,1517.12,723.80C1528.18,728.97,1539.24,737.67,1550.29,738.61C1561.35,739.54,1572.41,740.01,1583.47,740.01C1594.53,740.01,1605.59,729.21,1616.65,707.59C1627.71,685.97,1638.76,596.90,1649.82,596.90C1660.88,596.90,1671.94,634.74,1683.00,672.57L1683.0,752.0L555.0,752.0Z" fill="url(#g5)" fill-opacity="0.6" stroke="none"/>
<path d="M555.00,652.83C566.06,644.37,577.12,635.91,588.18,635.91C599.24,635.91,610.29,642.96,621.35,642.96C632.41,642.96,643.47,573.16,654.53,573.16C665.59,573.16,676.65,629.17,687.71,637.32C698.76,645.47,709.82,643.78,720.88,649.54C731.94,655.30,743.00,671.87,754.06,671.87C765.12,671.87,776.18,642.62,787.24,642.62C798.29,642.62,809.35,678.91,820.41,678.91C831.47,678.91,842.53,639.20,853.59,639.20C864.65,639.20,875.71,698.65,886.76,701.00C897.82,703.36,908.88,702.77,919.94,704.53C931.00,706.29,942.06,707.27,953.12,711.58C964.18,715.89,975.24,730.38,986.29,730.38C997.35,730.38,1008.41,712.75,1019.47,712.75C1030.53,712.75,1041.59,739.78,1052.65,739.78C1063.71,739.78,1074.76,723.80,1085.82,723.80C1096.88,723.80,1107.94,733.90,1119.00,736.73C1130.06,739.55,1141.12,740.96,1152.18,740.96C1163.24,740.96,1174.29,726.15,1185.35,726.15C1196.41,726.15,1207.47,739.08,1218.53,739.08C1229.59,739.08,1240.65,739.08,1251.71,739.08C1262.76,739.08,1273.82,727.25,1284.88,724.27C1295.94,721.29,1307.00,722.78,1318.06,719.80C1329.12,716.83,1340.18,661.52,1351.24,661.52C1362.29,661.52,1373.35,680.44,1384.41,685.97C1395.47,691.49,1406.53,694.66,1417.59,694.66C1428.65,694.66,1439.71,538.38,1450.76,538.38C1461.82,538.38,1472.88,696.77,1483.94,707.59C1495.00,718.39,1506.06,718.63,1517.12,723.80C1528.18,728.97,1539.24,737.67,1550.29,738.61C1561.35,739.54,1572.41,740.01,1583.47,740.01C1594.53,740.01,1605.59,729.21,1616.65,707.59C1627.71,685.97,1638.76,596.90,1649.82,596.90C1660.88,596.90,1671.94,634.74,1683.00,672.57" fill="none" stroke="#d084d0" stroke-width="2"/>
<circle cx="787.2" cy="642.6" r="4" fill="#d084d0" stroke="#d084d0" stroke-width="1"/>
<path d="M555.00,659.64C566.06,641.08,577.12,622.51,588.18,622.51C599.24,622.51,610.29,635.44,621.35,635.44C632.41,635.44,643.47,549.90,654.53,549.90C665.59,549.90,676.65,626.98,687.71,634.50C698.76,642.02,709.82,641.71,720.88,645.78C731.94,649.85,743.00,658.94,754.06,658.94C765.12,658.94,776.18,655.27,787.24,654.48C798.29,653.69,809.35,654.09,820.41,653.30C831.47,652.51,842.53,620.40,853.59,620.40C864.65,620.40,875.71,671.32,886.76,672.10C897.82,672.88,908.88,673.27,919.94,673.27C931.00,673.27,942.06,672.10,953.12,672.10C964.18,672.10,975.24,685.97,986.29,685.97C997.35,685.97,1008.41,650.25,1019.47,650.25C1030.53,650.25,1041.59,709.23,1052.65,709.23C1063.71,709.23,1074.76,686.20,1085.82,686.20C1096.88,686.20,1107.94,697.28,1119.00,700.77C1130.06,704.26,1141.12,707.12,1152.18,707.12C1163.24,707.12,1174.29,670.92,1185.35,670.92C1196.41,670.92,1207.47,710.88,1218.53,710.88C1229.59,710.88,1240.65,709.31,1251.71,706.17C1262.76,703.04,1273.82,681.74,1284.88,677.98C1295.94,674.22,1307.00,676.10,1318.06,672.34C1329.12,668.58,1340.18,544.26,1351.24,544.26C1362.29,544.26,1373.35,591.06,1384.41,610.30C1395.47,629.53,1406.53,659.64,1417.59,659.64C1428.65,659.64,1439.71,491.38,1450.76,491.38C1461.82,491.38,1472.88,626.51,1483.94,658.94C1495.00,691.37,1506.06,695.21,1517.12,707.59C1528.18,719.96,1539.24,733.20,1550.29,733.20C1561.35,733.20,1572.41,733.20,1583.47,733.20C1594.53,733.20,1605.59,709.90,1616.65,684.56C1627.71,659.21,1638.76,581.15,1649.82,581.15C1660.88,581.15,1671.94,632.27,1683.00,683.38L1683.0,752.0L555.0,752.0Z" fill="url(#g6)" fill-opacity="0.6" stroke="none"/>
<path d="M555.00,659.64C566.06,641.08,577.12,622.51,588.18,622.51C599.24,622.51,610.29,635.44,621.35,635.44C632.41,635.44,643.47,549.90,654.53,549.90C665.59,549.90,676.65,626.98,687.71,634.50C698.76,642.02,709.82,641.71,720.88,645.78C731.94,649.85,743.00,658.94,754.06,658.94C765.12,658.94,776.18,655.27,787.24,654.48C798.29,653.69,809.35,654.09,820.41,653.30C831.47,652.51,842.53,620.40,853.59,620.40C864.65,620.40,875.71,671.32,886.76,672.10C897.82,672.88,908.88,673.27,919.94,673.27C931.00,673.27,942.06,672.10,953.12,672.10C964.18,672.10,975.24,685.97,986.29,685.97C997.35,685.97,1008.41,650.25,1019.47,650.25C1030.53,650.25,1041.59,709.23,1052.65,709.23C1063.71,709.23,1074.76,686.20,1085.82,686.20C1096.88,686.20,1107.94,697.28,1119.00,700.77C1130.06,704.26,1141.12,707.12,1152.18,707.12C1163.24,707.12,1174.29,670.92,1185.35,670.92C1196.41,670.92,1207.47,710.88,1218.53,710.88C1229.59,710.88,1240.65,709.31,1251.71,706.17C1262.76,703.04,1273.82,681.74,1284.88,677.98C1295.94,674.22,1307.00,676.10,1318.06,672.34C1329.12,668.58,1340.18,544.26,1351.24,544.26C1362.29,544.26,1373.35,591.06,1384.41,610.30C1395.47,629.53,1406.53,659.64,1417.59,659.64C1428.65,659.64,1439.71,491.38,1450.76,491.38C1461.82,491.38,1472.88,626.51,1483.94,658.94C1495.00,691.37,1506.06,695.21,1517.12,707.59C1528.18,719.96,1539.24,733.20,1550.29,733.20C1561.35,733.20,1572.41,733.20,1583.47,733.20C1594.53,733.20,1605.59,709.90,1616.65,684.56C1627.71,659.21,1638.76,581.15,1649.82,581.15C1660.88,581.15,1671.94,632.27,1683.00,683.38" fill="none" stroke="#87d068" stroke-width="2"/>
<circle cx="787.2" cy="654.5" r="4" fill="#87d068" stroke="#87d068" stroke-width="1"/>
<path d="M555.00,661.06C566.06,662.00,577.12,662.93,588.18,662.93C599.24,662.93,610.29,662.93,621.35,662.93C632.41,662.93,643.47,614.52,654.53,614.52C665.59,614.52,676.65,643.35,687.71,645.08C698.76,646.80,709.82,645.94,720.88,647.66C731.94,649.38,743.00,668.81,754.06,668.81C765.12,668.81,776.18,668.46,787.24,668.23C798.29,667.99,809.35,667.95,820.41,667.40C831.47,666.85,842.53,639.20,853.59,639.20C864.65,639.20,875.71,669.04,886.76,673.27C897.82,677.50,908.88,677.86,919.94,679.62C931.00,681.38,942.06,683.85,953.12,683.85C964.18,683.85,975.24,683.62,986.29,683.14C997.35,682.67,1008.41,651.65,1019.47,651.65C1030.53,651.65,1041.59,706.64,1052.65,706.64C1063.71,706.64,1074.76,684.32,1085.82,684.32C1096.88,684.32,1107.94,688.55,1119.00,693.01C1130.06,697.48,1141.12,711.11,1152.18,711.11C1163.24,711.11,1174.29,676.10,1185.35,676.10C1196.41,676.10,1207.47,712.52,1218.53,712.52C1229.59,712.52,1240.65,710.40,1251.71,706.17C1262.76,701.94,1273.82,673.98,1284.88,673.98C1295.94,673.98,1307.00,691.37,1318.06,691.37C1329.12,691.37,1340.18,597.61,1351.24,597.61C1362.29,597.61,1373.35,642.76,1384.41,656.12C1395.47,669.48,1406.53,677.74,1417.59,677.74C1428.65,677.74,1439.71,591.26,1450.76,591.26C1461.82,591.26,1472.88,640.22,1483.94,658.94C1495.00,677.66,1506.06,691.80,1517.12,703.59C1528.18,715.38,1539.24,729.67,1550.29,729.67C1561.35,729.67,1572.41,728.19,1583.47,725.21C1594.53,722.23,1605.59,716.87,1616.65,705.00C1627.71,693.13,1638.76,654.00,1649.82,654.00C1660.88,654.00,1671.94,677.03,1683.00,700.07L1683.0,752.0L555.0,752.0Z" fill="url(#g7)" fill-opacity="0.6" stroke="none"/>
<path d="M555.00,661.06C566.06,662.00,577.12,662.93,588.18,662.93C599.24,662.93,610.29,662.93,621.35,662.93C632.41,662.93,643.47,614.52,654.53,614.52C665.59,614.52,676.65,643.35,687.71,645.08C698.76,646.80,709.82,645.94,720.88,647.66C731.94,649.38,743.00,668.81,754.06,668.81C765.12,668.81,776.18,668.46,787.24,668.23C798.29,667.99,809.35,667.95,820.41,667.40C831.47,666.85,842.53,639.20,853.59,639.20C864.65,639.20,875.71,669.04,886.76,673.27C897.82,677.50,908.88,677.86,919.94,679.62C931.00,681.38,942.06,683.85,953.12,683.85C964.18,683.85,975.24,683.62,986.29,683.14C997.35,682.67,1008.41,651.65,1019.47,651.65C1030.53,651.65,1041.59,706.64,1052.65,706.64C1063.71,706.64,1074.76,684.32,1085.82,684.32C1096.88,684.32,1107.94,688.55,1119.00,693.01C1130.06,697.48,1141.12,711.11,1152.18,711.11C1163.24,711.11,1174.29,676.10,1185.35,676.10C1196.41,676.10,1207.47,712.52,1218.53,712.52C1229.59,712.52,1240.65,710.40,1251.71,706.17C1262.76,701.94,1273.82,673.98,1284.88,673.98C1295.94,673.98,1307.00,691.37,1318.06,691.37C1329.12,691.37,1340.18,597.61,1351.24,597.61C1362.29,597.61,1373.35,642.76,1384.41,656.12C1395.47,669.48,1406.53,677.74,1417.59,677.74C1428.65,677.74,1439.71,591.26,1450.76,591.26C1461.82,591.26,1472.88,640.22,1483.94,658.94C1495.00,677.66,1506.06,691.80,1517.12,703.59C1528.18,715.38,1539.24,729.67,1550.29,729.67C1561.35,729.67,1572.41,728.19,1583.47,725.21C1594.53,722.23,1605.59,716.87,1616.65,705.00C1627.71,693.13,1638.76,654.00,1649.82,654.00C1660.88,654.00,1671.94,677.03,1683.00,700.07" fill="none" stroke="#8884d8" stroke-width="2"/>
<circle cx="787.2" cy="668.2" r="4" fill="#8884d8" stroke="#8884d8" stroke-width="1"/>
<text x="555.0" y="765.8" transform="rotate(-45 555.0 765.8)" text-anchor="end" dy="0.71em" font-family="Liberation Sans" font-size="12" fill="#a1a1aa">ANDAMAN ...</text>
<text x="621.4" y="765.8" transform="rotate(-45 621.4 765.8)" text-anchor="end" dy="0.71em" font-family="Liberation Sans" font-size="12" fill="#a1a1aa">ASSAM</text>
<text x="687.7" y="765.8" transform="rotate(-45 687.7 765.8)" text-anchor="end" dy="0.71em" font-family="Liberation Sans" font-size="12" fill="#a1a1aa">MANIPUR</text>
<text x="754.1" y="765.8" transform="rotate(-45 754.1 765.8)" text-anchor="end" dy="0.71em" font-family="Liberation Sans" font-size="12" fill="#a1a1aa">NAGALAND</text>
<text x="820.4" y="765.8" transform="rotate(-45 820.4 765.8)" text-anchor="end" dy="0.71em" font-family="Liberation Sans" font-size="12" fill="#a1a1aa">WEST BEN...</text>
<text x="886.8" y="765.8" transform="rotate(-45 886.8 765.8)" text-anchor="end" dy="0.71em" font-family="Liberation Sans" font-size="12" fill="#a1a1aa">ORISSA</text>
<text x="953.1" y="765.8" transform="rotate(-45 953.1 765.8)" text-anchor="end" dy="0.71em" font-family="Liberation Sans" font-size="12" fill="#a1a1aa">BIHAR</text>
<text x="1019.5" y="765.8" transform="rotate(-45 1019.5 765.8)" text-anchor="end" dy="0.71em" font-family="Liberation Sans" font-size="12" fill="#a1a1aa">UTTARANC...</text>
<text x="1085.8" y="765.8" transform="rotate(-45 1085.8 765.8)" text-anchor="end" dy="0.71em" font-family="Liberation Sans" font-size="12" fill="#a1a1aa">CHANDIGARH</text>
<text x="1152.2" y="765.8" transform="rotate(-45 1152.2 765.8)" text-anchor="end" dy="0.71em" font-family="Liberation Sans" font-size="12" fill="#a1a1aa">PUNJAB</text>
<text x="1218.5" y="765.8" transform="rotate(-45 1218.5 765.8)" text-anchor="end" dy="0.71em" font-family="Liberation Sans" font-size="12" fill="#a1a1aa">JAMMU AN...</text>
<text x="1284.9" y="765.8" transform="rotate(-45 1284.9 765.8)" text-anchor="end" dy="0.71em" font-family="Liberation Sans" font-size="12" fill="#a1a1aa">MADHYA P...</text>
<text x="1351.2" y="765.8" transform="rotate(-45 1351.2 765.8)" text-anchor="end" dy="0.71em" font-family="Liberation Sans" font-size="12" fill="#a1a1aa">DADAR NA...</text>
<text x="1417.6" y="765.8" transform="rotate(-45 1417.6 765.8)" text-anchor="end" dy="0.71em" font-family="Liberation Sans" font-size="12" fill="#a1a1aa">MAHARASH...</text>
<text x="1483.9" y="765.8" transform="rotate(-45 1483.9 765.8)" text-anchor="end" dy="0.71em" font-family="Liberation Sans" font-size="12" fill="#a1a1aa">CHATISGARH</text>
<text x="1550.3" y="765.8" transform="rotate(-45 1550.3 765.8)" text-anchor="end" dy="0.71em" font-family="Liberation Sans" font-size="12" fill="#a1a1aa">TAMIL NADU</text>
<text x="1616.6" y="765.8" transform="rotate(-45 1616.6 765.8)" text-anchor="end" dy="0.71em" font-family="Liberation Sans" font-size="12" fill="#a1a1aa">KARNATAKA</text>
<text x="1675.0" y="765.8" transform="rotate(-45 1675.0 765.8)" text-anchor="end" dy="0.71em" font-family="Liberation Sans" font-size="12" fill="#a1a1aa">LAKSHADW...</text>
</svg>
<div class="abs" style="left:797.5px;top:470.5px;width:127px;height:205px;border-radius:8px;background:#0a0a0b;border:1px solid #1f1f23"></div>
<div class="t" style="left:517.30px;top:467.23px;font-size:12px;color:#a1a1aa;letter-spacing:-0.394px;">1.2K</div>
<div class="t" style="left:518.90px;top:534.53px;font-size:12px;color:#a1a1aa;letter-spacing:0.726px;">900</div>
<div class="t" style="left:518.90px;top:604.73px;font-size:12px;color:#a1a1aa;letter-spacing:0.726px;">600</div>
<div class="t" style="left:519.00px;top:675.73px;font-size:12px;color:#a1a1aa;letter-spacing:0.626px;">300</div>
<div class="t" style="left:523.40px;top:746.13px;font-size:12px;color:#a1a1aa;letter-spacing:0.096px;">0.0</div>
<div class="t" style="left:808.50px;top:479.83px;font-size:12px;color:#fafafa;-webkit-text-stroke:0.15px currentColor;letter-spacing:-0.378px;">TRIPURA</div>
<div class="t" style="left:808.50px;top:501.83px;font-size:12px;color:#e4e4e7;letter-spacing:0.010px;">11.23J A N</div>
<div class="t" style="left:808.50px;top:523.83px;font-size:12px;color:#e4e4e7;letter-spacing:-0.003px;">33.65F E B</div>
<div class="t" style="left:808.50px;top:545.83px;font-size:12px;color:#e4e4e7;letter-spacing:0.234px;">93.63M A R</div>
<div class="t" style="left:808.50px;top:567.83px;font-size:12px;color:#e4e4e7;letter-spacing:0.012px;">220.75A P R</div>
<div class="t" style="left:808.50px;top:589.83px;font-size:12px;color:#e4e4e7;letter-spacing:0.133px;">391.58M A Y</div>
<div class="t" style="left:808.50px;top:611.83px;font-size:12px;color:#e4e4e7;letter-spacing:0.506px;">465.43J U N</div>
<div class="t" style="left:808.50px;top:633.83px;font-size:12px;color:#e4e4e7;letter-spacing:0.146px;">414.98J U L</div>
<div class="t" style="left:808.50px;top:655.83px;font-size:12px;color:#e4e4e7;letter-spacing:0.346px;">356.48A U G</div>
<div class="abs" style="left:851px;top:848px;width:8px;height:8px;border-radius:2px;background:#8884d8"></div>
<div class="t" style="left:866.00px;top:846.53px;font-size:12px;color:#e4e4e7;letter-spacing:0.332px;">J A N</div>
<div class="abs" style="left:912px;top:848px;width:8px;height:8px;border-radius:2px;background:#82ca9d"></div>
<div class="t" style="left:926.60px;top:846.53px;font-size:12px;color:#e4e4e7;letter-spacing:-0.400px;">F E B</div>
<div class="abs" style="left:971px;top:848px;width:8px;height:8px;border-radius:2px;background:#ffc658"></div>
<div class="t" style="left:985.60px;top:846.53px;font-size:12px;color:#e4e4e7;letter-spacing:-0.067px;">M A R</div>
<div class="abs" style="left:1035px;top:848px;width:8px;height:8px;border-radius:2px;background:#ff7c7c"></div>
<div class="t" style="left:1049.00px;top:846.53px;font-size:12px;color:#e4e4e7;letter-spacing:-0.419px;">A P R</div>
<div class="abs" style="left:1095px;top:848px;width:8px;height:8px;border-radius:2px;background:#8dd1e1"></div>
<div class="t" style="left:1109.60px;top:846.53px;font-size:12px;color:#e4e4e7;letter-spacing:0.183px;">M A Y</div>
<div class="abs" style="left:1159px;top:848px;width:8px;height:8px;border-radius:2px;background:#d084d0"></div>
<div class="t" style="left:1173.00px;top:846.53px;font-size:12px;color:#e4e4e7;letter-spacing:0.667px;">J U N</div>
<div class="abs" style="left:1221px;top:848px;width:8px;height:8px;border-radius:2px;background:#87d068"></div>
<div class="t" style="left:1235.00px;top:846.53px;font-size:12px;color:#e4e4e7;letter-spacing:0.167px;">J U L</div>
<div class="abs" style="left:1280px;top:848px;width:8px;height:8px;border-radius:2px;background:#8884d8"></div>
<div class="t" style="left:1294.00px;top:846.53px;font-size:12px;color:#e4e4e7;letter-spacing:0.166px;">A U G</div>
<svg style="left:791px;top:561px" width="14" height="20" viewBox="0 0 14 20"><path d="M1 1L1 16L4.6 12.6L7.2 18.5L9.6 17.5L7.1 11.7L12 11.5Z" fill="#111" stroke="#fff" stroke-width="1.1" stroke-linejoin="round"/></svg>
<div class="card" style="left:465px;top:906px;width:616px;height:300px"></div>
<div class="t" style="left:489.30px;top:931.08px;font-size:17px;color:#fafafa;-webkit-text-stroke:0.5px currentColor;letter-spacing:0.161px;">Bar Chart Visualization</div>
<div class="t" style="left:489.80px;top:956.67px;font-size:14px;color:#a1a1aa;letter-spacing:0.485px;">Showing 6 metrics across 35 categories</div>
<svg style="left:483px;top:1019px" width="16" height="15" viewBox="0 0 16 16"><rect x="0" y="0" width="16" height="16" fill="#f4f6f8"/><path d="M0 3.5h16M0 6.5h16M0 9.5h16M0 12.5h16" stroke="#d5dbe3" stroke-width="0.6"/><rect x="2.5" y="7" width="2" height="8" fill="#8bc34a"/><rect x="7" y="9.5" width="2" height="5.5" fill="#f44336"/><rect x="11.5" y="3" width="2" height="12" fill="#1e88e5"/></svg>
<div class="t" style="left:503.20px;top:1019.07px;font-size:14px;color:#475569;letter-spacing:0.505px;">X-Axis (Categories)</div>
<div class="sel" style="left:482px;top:1045px;width:283px;height:36px"></div>
<div class="t" style="left:495.70px;top:1056.87px;font-size:14px;color:#fafafa;-webkit-text-stroke:0.2px currentColor;letter-spacing:0.071px;">S T A T E U T N A M E</div>
<div class="t" style="left:648.70px;top:1059.03px;font-size:12px;color:#71717a;letter-spacing:0.427px;">Categorical</div>
<svg style="left:736px;top:1055px;color:#7c7c85" width="16" height="16" viewBox="0 0 24 24" fill="none" stroke="currentColor" stroke-width="2" stroke-linecap="round" stroke-linejoin="round"><path d="m6 9 6 6 6-6"/></svg>
<svg style="left:782px;top:1018px" width="16" height="15" viewBox="0 0 16 16"><rect x="0" y="0" width="16" height="16" fill="#f4f6f8"/><path d="M0 4h16M0 8h16M0 12h16M4 0v16M8 0v16M12 0v16" stroke="#d5dbe3" stroke-width="0.5"/><path d="M1 14.5L5 9l3 2.5L14.5 2.5" stroke="#e53935" stroke-width="1.4" fill="none"/></svg>
<div class="t" style="left:802.20px;top:1019.07px;font-size:14px;color:#475569;letter-spacing:0.637px;">Y-Axis (Metrics) - 6 selected</div>
<div class="btn" style="left:1014px;top:1013px;width:50px;height:24px"></div>
<div class="t" style="left:1023.00px;top:1019.63px;font-size:12px;color:#fafafa;-webkit-text-stroke:0.2px currentColor;letter-spacing:-0.003px;">Reset</div>
<div class="sel2" style="left:781px;top:1045px;width:283px;height:36px"></div>
<div class="t" style="left:794.30px;top:1056.67px;font-size:14px;color:#fafafa;-webkit-text-stroke:0.25px currentColor;letter-spacing:0.627px;">6 metrics selected</div>
<svg style="left:1036px;top:1055px;color:#7c7c85" width="16" height="16" viewBox="0 0 24 24" fill="none" stroke="currentColor" stroke-width="2" stroke-linecap="round" stroke-linejoin="round"><path d="m6 9 6 6 6-6"/></svg>
<div class="card" style="left:1097px;top:906px;width:616px;height:300px"></div>
<div class="t" style="left:1121.30px;top:931.28px;font-size:17px;color:#fafafa;-webkit-text-stroke:0.5px currentColor;letter-spacing:0.170px;">Pie Chart Visualization</div>
<div class="t" style="left:1121.80px;top:956.57px;font-size:14px;color:#a1a1aa;letter-spacing:0.338px;">Showing 20 segments with total value of 11.8K</div>
<svg style="left:1115px;top:1018px" width="16" height="16" viewBox="0 0 16 16"><path d="M5.2 2.2C3.6 0.8 1.2 1.6 1.1 3.5C1 4.6 1.8 5.6 2.8 5.9" stroke="#5f7380" stroke-width="1.2" fill="none"/><path d="M2.6 6.2L5.3 3.2L14.6 11.4L10.9 15.2z" fill="#fdd48e"/><path d="M2.6 6.2L10.9 15.2L11.6 14.5L3.3 5.5z" fill="#f5a443"/><circle cx="4.9" cy="5.3" r="0.8" fill="#4f6573"/></svg>
<div class="t" style="left:1134.00px;top:1018.47px;font-size:14px;color:#475569;letter-spacing:0.494px;">Labels (Categories)</div>
<div class="sel" style="left:1114px;top:1037px;width:283px;height:36px"></div>
<div class="t" style="left:1127.50px;top:1048.47px;font-size:14px;color:#fafafa;-webkit-text-stroke:0.2px currentColor;letter-spacing:0.071px;">S T A T E U T N A M E</div>
<div class="t" style="left:1280.70px;top:1050.63px;font-size:12px;color:#71717a;letter-spacing:0.427px;">Categorical</div>
<svg style="left:1369px;top:1048px;color:#7c7c85" width="16" height="16" viewBox="0 0 24 24" fill="none" stroke="currentColor" stroke-width="2" stroke-linecap="round" stroke-linejoin="round"><path d="m6 9 6 6 6-6"/></svg>
<svg style="left:1414px;top:1019px" width="16" height="15" viewBox="0 0 16 16"><rect x="0" y="0" width="16" height="16" fill="#f4f6f8"/><path d="M0 3.5h16M0 6.5h16M0 9.5h16M0 12.5h16" stroke="#d5dbe3" stroke-width="0.6"/><rect x="2.5" y="7" width="2" height="8" fill="#8bc34a"/><rect x="7" y="9.5" width="2" height="5.5" fill="#f44336"/><rect x="11.5" y="3" width="2" height="12" fill="#1e88e5"/></svg>
<div class="t" style="left:1434.00px;top:1019.07px;font-size:14px;color:#475569;letter-spacing:0.531px;">Values (Numeric)</div>
<div class="btn" style="left:1646px;top:1013px;width:50px;height:24px"></div>
<div class="t" style="left:1655.00px;top:1019.63px;font-size:12px;color:#fafafa;-webkit-text-stroke:0.2px currentColor;letter-spacing:-0.003px;">Reset</div>
<div class="sel" style="left:1413px;top:1045px;width:283px;height:36px"></div>
<div class="t" style="left:1426.50px;top:1056.87px;font-size:14px;color:#fafafa;-webkit-text-stroke:0.2px currentColor;letter-spacing:0.646px;">J A N</div>
<div class="t" style="left:1470.00px;top:1059.03px;font-size:12px;color:#71717a;letter-spacing:0.503px;">numeric</div>
<svg style="left:1668px;top:1055px;color:#7c7c85" width="16" height="16" viewBox="0 0 24 24" fill="none" stroke="currentColor" stroke-width="2" stroke-linecap="round" stroke-linejoin="round"><path d="m6 9 6 6 6-6"/></svg>
<div class="abs" style="left:1865px;top:1024px;width:36px;height:36px;border-radius:18px;background:#000;border:1px solid #2a2a2a"></div>
<svg style="left:1874px;top:1033px" width="18" height="18" viewBox="0 0 18 18"><path d="M4.5 4.5v9M4.5 4.5l9 10M13 4.5v6" stroke="#fff" stroke-width="1.8" fill="none"/></svg>
</body></html>
